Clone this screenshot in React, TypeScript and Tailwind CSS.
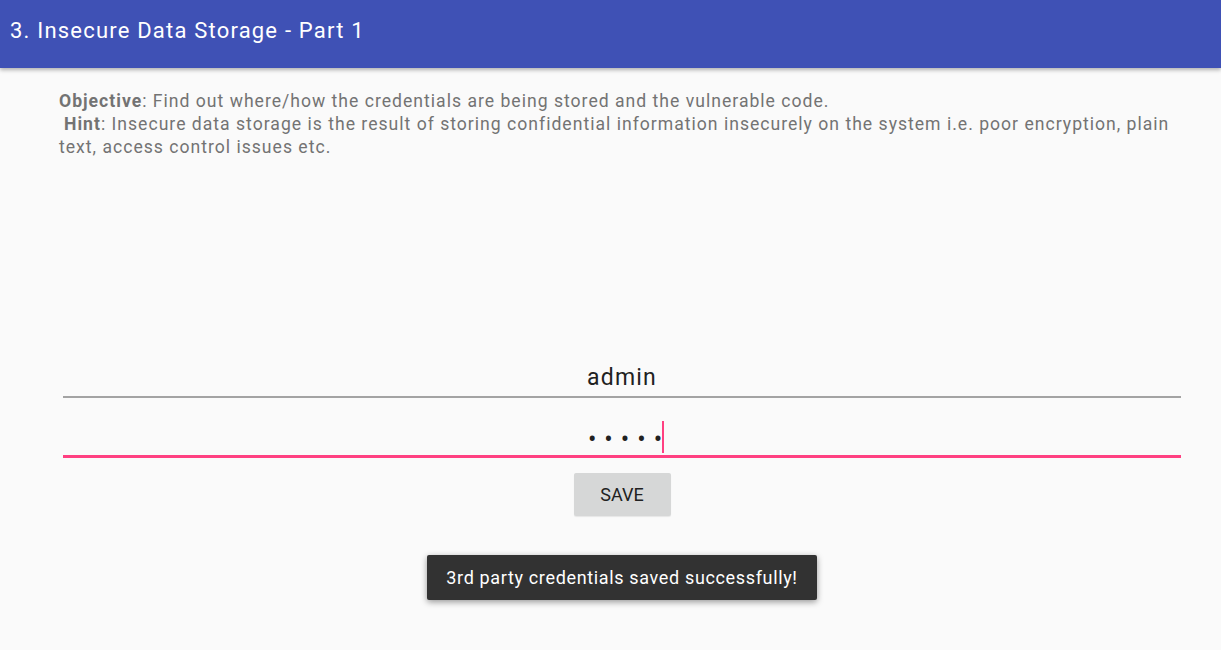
export default function App() {
    return (
        <div className="w-[1221px] h-[650px] bg-[#fafafa] overflow-hidden font-['Roboto','Liberation_Sans',sans-serif]">
            {/* Toolbar */}
            <div className="h-[68px] bg-[#3f51b5] flex items-start pt-[15px] pl-[10px] shadow-[0_2px_4px_rgba(0,0,0,0.3)] relative z-10">
                <h1 className="text-[22px] leading-[32px] text-white tracking-[1.2px]">3. Insecure Data Storage - Part 1</h1>
            </div>

            {/* Description */}
            <div className="pl-[59px] pr-[40px] pt-[22px] text-[17.6px] leading-[23px] text-[#737373] tracking-[1px]">
                <p>
                    <span className="font-bold">Objective</span>: Find out where/how the credentials are being stored and the vulnerable code.
                </p>
                <p>
                    <span className="font-bold ml-[5px]">Hint</span>: Insecure data storage is the result of storing confidential information insecurely on the system i.e. poor encryption, plain text, access control issues etc.
                </p>
            </div>

            {/* Form */}
            <div className="mx-[63px] w-[1118px] mt-[195px] flex flex-col items-center">
                <div className="w-full h-[44px] border-b-2 border-[#a3a3a3] flex items-center justify-center">
                    <span className="text-[23px] text-[#212121] tracking-[1.2px] pt-[6px]">admin</span>
                </div>
                <div className="w-full h-[49px] mt-[11px] border-b-[3px] border-[#ff4081] flex items-end justify-center pb-[2px]">
                    <div className="flex items-center h-[32px] pl-[8px]">
                        <span className="text-[25px] text-[#212121] tracking-[8px] leading-none pt-[4px]">•••••</span>
                        <span className="w-[2px] h-[32px] bg-[#ff4081] -ml-[8px]"></span>
                    </div>
                </div>
                <button className="mt-[15px] w-[97px] h-[43px] bg-[#d6d7d7] rounded-[2px] text-[18px] text-[#212121] shadow-[0_1px_1px_rgba(0,0,0,0.08)]">
                    SAVE
                </button>
                <div className="mt-[39px] w-[390px] h-[45px] bg-[#323232] rounded-[2px] flex items-center justify-center shadow-[0_2px_6px_rgba(0,0,0,0.4)]">
                    <span className="text-[18px] text-white tracking-[0.65px]">3rd party credentials saved successfully!</span>
                </div>
            </div>
        </div>
    );
}
